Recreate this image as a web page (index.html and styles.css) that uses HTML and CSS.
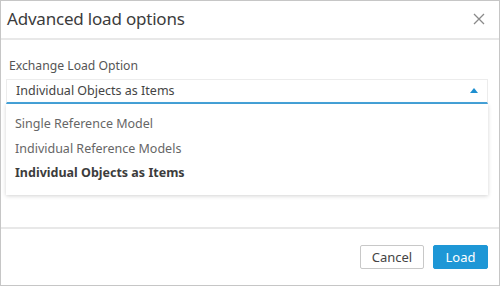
FILE: index.html
```html
<!DOCTYPE html>
<html>
<head>
<meta charset="utf-8">
<link rel="stylesheet" href="styles.css">
</head>
<body>
<div class="dialog">
  <div class="header">
    <div class="title">Advanced load options</div>
    <svg class="close" width="12" height="12" viewBox="0 0 12 12"><path d="M1 1L11 11M11 1L1 11" stroke="#8a8a8a" stroke-width="1.3" fill="none"/></svg>
  </div>
  <div class="body">
    <div class="label">Exchange Load Option</div>
    <div class="field">
      <div class="select">
        <span>Individual Objects as Items</span>
        <svg class="caret" width="8" height="5" viewBox="0 0 8 5"><path d="M0 5L4 0L8 5Z" fill="#1e8fd0"/></svg>
      </div>
      <div class="menu">
        <div class="item">Single Reference Model</div>
        <div class="item">Individual Reference Models</div>
        <div class="item selected">Individual Objects as Items</div>
      </div>
    </div>
  </div>
  <div class="footer">
    <button class="btn cancel">Cancel</button>
    <button class="btn load">Load</button>
  </div>
</div>
</body>
</html>
```
FILE: styles.css
```css
* { box-sizing: border-box; }
body { margin: 0; font-family: "Noto Sans", "Liberation Sans", sans-serif; color: #3c3c3c; }
.dialog { width: 500px; height: 286px; border: 1px solid #c6c6c6; display: flex; flex-direction: column; background: #fff; }
.header { height: 39px; border-bottom: 2px solid #e8e8e8; display: flex; align-items: center; justify-content: space-between; padding: 0 14px 2px 6px; }
.title { font-size: 17px; color: #3c3c3c; letter-spacing: -0.2px; }
.close { margin-top: 1px; }
.body { flex: 1; padding: 17px 11px 0 5px; position: relative; }
.label { font-size: 12.2px; color: #555; padding-left: 3px; line-height: 18px; height: 22px; }
.field { position: relative; }
.select { height: 25px; border: 1px solid #ececec; border-bottom: 2px solid #47a5dc; display: flex; align-items: center; justify-content: space-between; padding: 0 8px 1px 9px; font-size: 12.5px; color: #444; }
.caret { margin-right: 1px; margin-top: -1px; }
.menu { position: absolute; left: 0; right: 0; top: 25px; background: #fff; box-shadow: 0 1px 4px rgba(0,0,0,0.18); padding: 8px 0 9px; z-index: 2; }
.item { font-size: 12.5px; color: #666; padding-left: 9px; height: 24.5px; line-height: 24.5px; }
.item.selected { font-weight: bold; color: #3c3c3c; }
.footer { height: 58px; border-top: 2px solid #e8e8e8; display: flex; justify-content: flex-end; align-items: flex-start; gap: 9px; padding: 16px 11px 0 0; }
.btn { font-family: inherit; font-size: 13px; height: 24px; border-radius: 2px; padding: 0; cursor: pointer; }
.cancel { width: 64px; background: #fff; border: 1px solid #c8c8c8; color: #444; }
.load { width: 55px; background: #1e97d6; border: 1px solid #1e97d6; color: #fff; }
```
